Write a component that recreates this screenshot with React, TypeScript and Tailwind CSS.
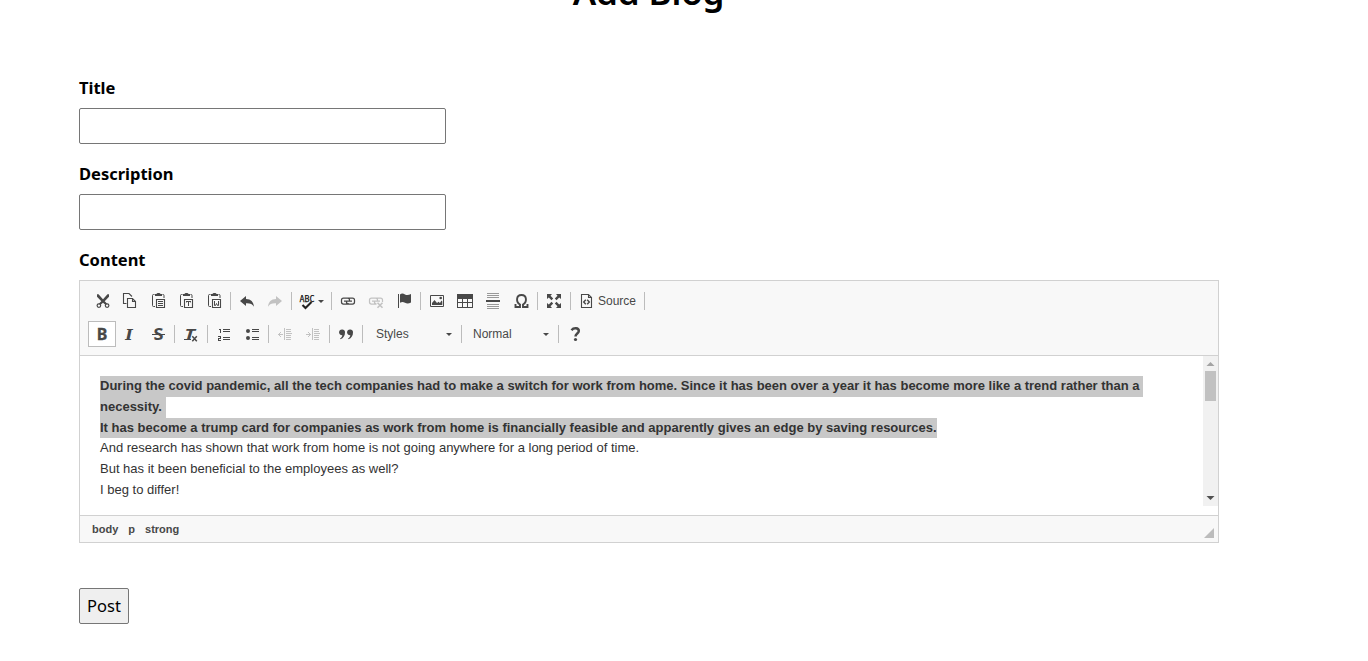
import React, { type ReactNode } from "react";

function Icon({ children, crisp = false }: { children: ReactNode; crisp?: boolean }) {
  return (
    <svg
      viewBox="0 0 16 16"
      className="block h-4 w-4 shrink-0 overflow-visible"
      fill="currentColor"
      shapeRendering={crisp ? "crispEdges" : "auto"}
      aria-hidden="true"
    >
      {children}
    </svg>
  );
}

function Tool({ label, children, active = false, disabled = false }: { label: string; children: ReactNode; active?: boolean; disabled?: boolean }) {
  return (
    <button
      type="button"
      aria-label={label}
      className={
        "flex h-[26px] w-7 shrink-0 items-center justify-center " +
        (active ? "border border-[#bcbcbc] bg-white " : "") +
        (disabled ? "text-[#c2c2c2]" : "text-[#484848]")
      }
    >
      {children}
    </button>
  );
}

const Sep = () => <span className="mx-0.5 h-[18px] w-px shrink-0 bg-[#bcbcbc]" />;

const Caret = () => (
  <svg viewBox="0 0 6 3" className="h-[3px] w-1.5 shrink-0" fill="#484848">
    <path d="M0 0h6L3 3z" />
  </svg>
);

function PasteBase({ children }: { children: ReactNode }) {
  return (
    <Icon>
      <path d="M5 3V1h1.5q.2-1 1.500-1h1q1.300 0 1.500 1H12v2z" />
      <path d="M4.500 1.500h-1q-1 0-1 1v10q0 1 1 1H5M12.500 1.500h.5q1 0 1 1V5" fill="none" stroke="currentColor" />
      <path d="M6.500 6.500h8v8h-8z" fill="none" stroke="currentColor" strokeWidth="1.100" />
      {children}
    </Icon>
  );
}

const linkRings = (
  <path
    d="M9.500 7.500V7Q9.500 5 7.500 5h-4Q1.500 5 1.500 7v2Q1.500 11 3.500 11h4Q8.500 11 9 10.500M6.500 8.500V9Q6.500 11 8.500 11h4Q14.500 11 14.500 9V7Q14.500 5 12.500 5h-4Q7.800 5 7.300 5.500M4 8h8"
    fill="none"
    stroke="currentColor"
    strokeWidth="1.250"
  />
);

function Field({ label }: { label: string }) {
  return (
    <label className="flex flex-col">
      <FieldLabel>{label}</FieldLabel>
      <input className="mb-[18px] h-9 w-[367px] rounded-[2px] border border-[#767676] bg-white px-2 outline-none" />
    </label>
  );
}

function FieldLabel({ children }: { children: ReactNode }) {
  return <span className="flex h-8 items-start text-[16.5px] leading-6 font-bold">{children}</span>;
}

function Combo({ label, width }: { label: string; width: string }) {
  return (
    <button type="button" className={"flex h-[26px] shrink-0 items-center justify-between pr-[7px] font-['Liberation_Sans',sans-serif] text-xs text-[#484848] " + width}>
      <span>{label}</span>
      <Caret />
    </button>
  );
}

export default function App() {
  return (
    <main className="flex h-[661px] flex-col overflow-hidden bg-white pl-[79px] font-['Noto_Sans',sans-serif] text-black">
      <h1 className="-mt-[33px] flex h-[109px] w-[1140px] shrink-0 justify-center text-[35px] leading-[50px] font-semibold">
        <span className="-ml-px tracking-[-0.15px]">Add Blog</span>
      </h1>
      <form>
        <Field label="Title" />
        <Field label="Description" />
        <FieldLabel>Content</FieldLabel>

        <section className="flex h-[263px] w-[1140px] flex-col border border-[#d1d1d1] bg-white font-['Liberation_Sans',sans-serif]">
          <div className="flex h-[75px] shrink-0 flex-col gap-[7px] border-b border-[#d1d1d1] bg-[#f8f8f8] pt-[7px] pl-2">
            <div className="flex h-[26px] items-center">
              <Tool label="Cut">
                <Icon>
                  <path d="M3 1.200h1.500L9 6.200l4.500-5H15v2.500L10.700 8.300l3 3-1.500 1.200L9 9.700l-3.200 2.800-1.500-1.200 3-3L3 3.700z" />
                  <circle cx="4.900" cy="12.600" r="1.800" fill="#f8f8f8" stroke="currentColor" strokeWidth="1.200" />
                  <circle cx="13.100" cy="12.600" r="1.800" fill="#f8f8f8" stroke="currentColor" strokeWidth="1.200" />
                </Icon>
              </Tool>
              <Tool label="Copy">
                <Icon>
                  <path d="M4.500 10.500h-3V.5H7L10 3.500M5.500 5.500h5l3 3v6h-8zM10.500 5.500v3h3" fill="none" stroke="currentColor" strokeWidth="1.100" />
                </Icon>
              </Tool>
              <Tool label="Paste">
                <PasteBase><path d="M8 8h5v1H8zM8 10h5v1H8zM8 12h5v1H8z" /></PasteBase>
              </Tool>
              <Tool label="Paste as plain text">
                <PasteBase><path d="M8 8h5v1.600h-.8V9H11v4h-1V9H8.800v.6H8z" /></PasteBase>
              </Tool>
              <Tool label="Paste from Word">
                <PasteBase><path d="M8.500 8v4.500h1l1-2 1 2h1V8" fill="none" stroke="currentColor" /></PasteBase>
              </Tool>
              <Sep />
              <Tool label="Undo">
                <Icon><path d="M1 8 7 3v3c5 0 7.500 3 8 7.700C13.500 11 11 10 7 10.200V13z" /></Icon>
              </Tool>
              <Tool label="Redo" disabled>
                <Icon><path d="M15 8 9 3v3c-5 0-7.500 3-8 7.700C2.500 11 5 10 9 10.200V13z" /></Icon>
              </Tool>
              <Sep />
              <button type="button" aria-label="Spell check" className="flex h-[26px] w-[35px] shrink-0 items-center gap-[3px] pl-[5px] text-[#222]">
                <svg viewBox="0 0 16 16" className="h-4 w-4 shrink-0 overflow-visible">
                  <text x="0.500" y="8.800" textLength="15" lengthAdjust="spacingAndGlyphs" fontFamily="DejaVu Sans Mono" fontSize="9.500" fill="#111" stroke="#111" strokeWidth="0.250">ABC</text>
                  <path d="m3.500 12 3 3 6-6" fill="none" stroke="currentColor" strokeWidth="2.100" />
                </svg>
                <Caret />
              </button>
              <Sep />
              <Tool label="Link"><Icon>{linkRings}</Icon></Tool>
              <Tool label="Unlink" disabled>
                <Icon>
                  {linkRings}
                  <path d="M8.500 9h7v7h-7z" fill="#f8f8f8" />
                  <path d="m9.500 9.800 5 5M14.500 9.800l-5 5" fill="none" stroke="currentColor" strokeWidth="1.600" />
                </Icon>
              </Tool>
              <Tool label="Anchor">
                <Icon>
                  <path d="M2 1h1v14H2zM4 1.500C6-.2 7.500.7 9 1.500s3.500.9 6-.5v8.500c-2.500 1.300-4.500 1-6 .2s-3-1.200-5 0z" />
                </Icon>
              </Tool>
              <Sep />
              <Tool label="Image">
                <Icon>
                  <path d="M1.500 2.500h13v11h-13z" fill="none" stroke="currentColor" />
                  <path d="M3 12v-2l2.500-3L8 10l1.500-1.200L11 10l1.500-2.500.8 1V12z" />
                  <circle cx="11.700" cy="5" r="1.300" />
                </Icon>
              </Tool>
              <Tool label="Table">
                <Icon crisp>
                  <path d="M0 1h16v14H0zM1 6v3h4V6zM6 6v3h4V6zM11 6v3h4V6zM1 10v4h4v-4zM6 10v4h4v-4zM11 10v4h4v-4z" fillRule="evenodd" />
                </Icon>
              </Tool>
              <Tool label="Horizontal line">
                <Icon crisp>
                  <path d="M2 0h12v1H2zM2 2h12v1H2zM2 4h12v1H2zM2 11h12v1H2zM2 13h12v1H2zM2 15h12v1H2z" fill="#999" />
                  <path d="M1 7h14v2H1z" />
                </Icon>
              </Tool>
              <Tool label="Special character">
                <Icon>
                  <path d="M2.500 11v3H7v-2.500C3 9.500 2.700 2 8.500 2S14 9.500 10 11.500V14h4.500v-3" fill="none" stroke="currentColor" strokeWidth="1.900" />
                </Icon>
              </Tool>
              <Sep />
              <Tool label="Maximize">
                <Icon>
                  <path d="M1 1h5L4.500 2.800l2.700 2.700-1.700 1.700-2.700-2.700L1 6zM15 1h-5l1.500 1.800-2.700 2.700 1.700 1.700 2.700-2.700L15 6zM1 15h5l-1.500-1.800 2.700-2.700-1.700-1.700-2.700 2.700L1 10zM15 15h-5l1.500-1.800-2.700-2.700 1.700-1.700 2.700 2.700L15 10z" />
                </Icon>
              </Tool>
              <Sep />
              <button type="button" className="flex h-[26px] w-[69px] shrink-0 items-center gap-[3px] pl-1.5 text-xs text-[#484848]">
                <Icon>
                  <path d="M2.500 1.500h7l3 3v10h-10zM9.500 1.500v3h3" fill="none" stroke="currentColor" strokeWidth="1.100" />
                  <path d="M6.800 6.700 4.700 9l2.100 2.300M8.200 6.700 10.300 9l-2.100 2.300" fill="none" stroke="currentColor" strokeWidth="1.400" />
                </Icon>
                <span>Source</span>
              </button>
              <Sep />
            </div>

            <div className="flex h-[26px] items-center">
              <Tool label="Bold" active>
                <Icon><text x="2.800" y="14" fontFamily="Noto Sans" fontWeight="700" fontSize="16" stroke="currentColor" strokeWidth="0.300">B</text></Icon>
              </Tool>
              <Tool label="Italic">
                <Icon><text x="3.300" y="14" fontFamily="DejaVu Serif" fontStyle="italic" fontWeight="700" fontSize="15.500" textLength="7.500" lengthAdjust="spacingAndGlyphs">I</text></Icon>
              </Tool>
              <Tool label="Strikethrough">
                <Icon>
                  <text x="3.500" y="14" fontFamily="Noto Sans" fontWeight="700" fontSize="16" textLength="10" lengthAdjust="spacingAndGlyphs">S</text>
                  <path d="M2 8h13v1H2z" />
                </Icon>
              </Tool>
              <Sep />
              <Tool label="Remove format">
                <Icon>
                  <text x="1.500" y="12.500" fontFamily="Noto Sans" fontStyle="italic" fontWeight="700" fontSize="15" textLength="10.500" lengthAdjust="spacingAndGlyphs">T</text>
                  <path d="M1 13h7v1H1z" />
                  <path d="m9.300 10.300 4.500 5M13.800 10.300l-4.500 5" fill="none" stroke="currentColor" strokeWidth="1.500" />
                </Icon>
              </Tool>
              <Sep />
              <Tool label="Numbered list">
                <Icon crisp>
                  <path d="M7 3h7v1H7zM7 5h7v1H7zM7 11h7v1H7zM7 13h7v1H7zM3 3h2v4H4V4H3zM2 10h3v3H3v1h2v1H2v-3h2v-1H2z" />
                </Icon>
              </Tool>
              <Tool label="Bulleted list">
                <Icon>
                  <circle cx="4" cy="5" r="2" /><circle cx="4" cy="12" r="2" />
                  <path d="M8 3h7v1H8zM8 5h7v1H8zM8 11h7v1H8zM8 13h7v1H8z" />
                </Icon>
              </Tool>
              <Sep />
              <Tool label="Decrease indent" disabled>
                <Icon crisp>
                  <path d="M7 2h1v12H7zM9 3h5v1H9zM9 5h5v1H9zM9 7h6v1H9zM9 9h5v1H9zM9 11h5v1H9zM9 13h5v1H9zM1 8h5v1H1zM2 7h1v3H2zM3 6h1v1H3zM3 10h1v1H3z" />
                </Icon>
              </Tool>
              <Tool label="Increase indent" disabled>
                <Icon crisp>
                  <path d="M7 2h1v12H7zM9 3h5v1H9zM9 5h5v1H9zM9 7h6v1H9zM9 9h5v1H9zM9 11h5v1H9zM9 13h5v1H9zM1 8h5v1H1zM4 7h1v3H4zM3 6h1v1H3zM3 10h1v1H3z" />
                </Icon>
              </Tool>
              <Sep />
              <Tool label="Block quote">
                <Icon>
                  <path d="M4 3.500a2.700 2.700 0 0 1 3 3c0 3-1.500 5.700-4.500 6.700L2 12.500c1.500-.7 2.200-2 2.300-3.300C-.2 9 .3 3.500 4 3.500zM12 3.500a2.700 2.700 0 0 1 3 3c0 3-1.500 5.700-4.500 6.700l-.5-.7c1.500-.7 2.200-2 2.300-3.300-4.500-.2-4-5.700-.3-5.700z" />
                </Icon>
              </Tool>
              <Sep />
              <Combo label="Styles" width="w-[94px] pl-[11px]" />
              <Sep />
              <Combo label="Normal" width="w-[92px] pl-[9px]" />
              <Sep />
              <Tool label="About">
                <Icon>
                  <path d="M4.500 4.200C6.700 1.500 11.800 1.700 11.800 5c0 2.600-3.300 2.500-3.300 5.500" fill="none" stroke="currentColor" strokeWidth="2.500" />
                  <circle cx="8.500" cy="13.500" r="1.600" />
                </Icon>
              </Tool>
            </div>
          </div>

          <div className="flex h-[159px] shrink-0 items-start justify-between">
            <div className="h-[150px] overflow-hidden pt-5 pl-5 text-[13px] leading-[20.8px] whitespace-pre text-[#333]">
              <p className="font-bold">
                <span className="inline-block h-[20.8px] bg-[#c8c8c8] align-top">During the covid pandemic, all the tech companies had to make a switch for work from home. Since it has been over a year it has become more like a trend rather than a </span><br />
                <span className="inline-block h-[20.8px] bg-[#c8c8c8] align-top">necessity. </span><br />
                <span className="inline-block h-[20.8px] bg-[#c8c8c8] align-top">It has become a trump card for companies as work from home is financially feasible and apparently gives an edge by saving resources.</span>
              </p>
              <p>And research has shown that work from home is not going anywhere for a long period of time.</p>
              <p>But has it been beneficial to the employees as well?</p>
              <p>I beg to differ!</p>
            </div>
            <div className="flex h-[150px] w-[15px] shrink-0 flex-col items-center bg-[#f1f1f1]">
              <svg viewBox="0 0 15 15" className="h-[15px] w-[15px] shrink-0" fill="#a3a3a3"><path d="M3.500 10h8l-4-4z" /></svg>
              <span className="h-[30px] w-[11px] bg-[#c1c1c1]" />
              <svg viewBox="0 0 15 15" className="mt-auto h-[15px] w-[15px] shrink-0" fill="#505050"><path d="M3.500 5h8l-4 4z" /></svg>
            </div>
          </div>

          <footer className="flex grow items-center justify-between border-t border-[#d1d1d1] bg-[#f8f8f8] pr-1 pl-3 text-[11px] font-bold text-[#484848]">
            <div className="flex gap-2.5">
              <span>body</span><span>p</span><span>strong</span>
            </div>
            <svg viewBox="0 0 10 10" className="mb-1 h-2.5 w-2.5 self-end" fill="#bcbcbc"><path d="M10 0v10H0z" /></svg>
          </footer>
        </section>

        <button type="button" className="mt-[45px] flex h-9 w-[50px] items-center justify-center rounded-[2px] border border-[#767676] bg-[#efefef] text-[16.5px]">
          Post
        </button>
      </form>
    </main>
  );
}
